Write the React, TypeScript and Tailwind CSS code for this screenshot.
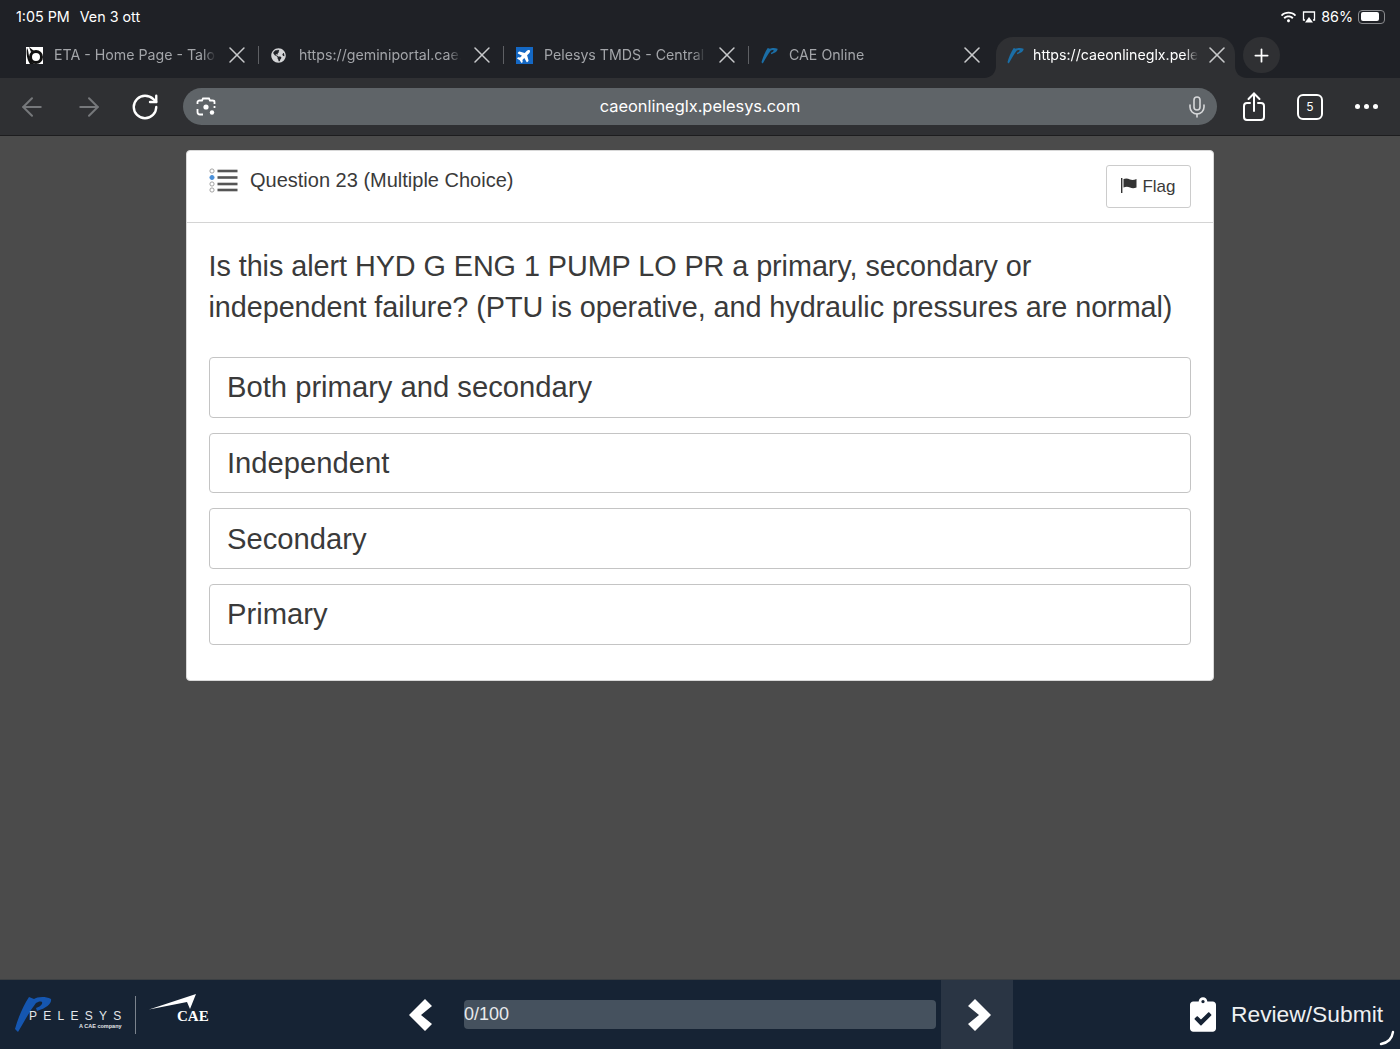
import { ArrowLeft, ArrowRight, Mic, Plus, RotateCw, X } from "lucide-react";
import { FaClipboardCheck, FaGlobeAmericas, FaPlane, FaWifi } from "react-icons/fa";

const answers = ["Both primary and secondary", "Independent", "Secondary", "Primary"];

function PMark({ className }: { className: string }) {
  return (
    <svg viewBox="0 0 38 36" className={className} fill="currentColor">
      <path d="M1 33 C4 22 9 10 15 1 L20 3 C23 1 31 0 37 3 C38 7 33 12 23 15 L22 12 C26 11 29 8 28 6 C26 5 24 6 22 7 C15 16 10 26 4 36 Z" />
    </svg>
  );
}

function TabIcon({ kind }: { kind: string }) {
  if (kind === "eta") {
    return (
      <svg viewBox="0 0 17 17" className="w-[17px] h-[17px]">
        <rect width="17" height="17" fill="#fff" />
        <path d="M1 1 C3 4 2 9 5 14 C6 16 8 17 11 17 L4 17 C1 13 0 6 1 1Z" fill="#111" />
        <circle cx="10" cy="10" r="5.5" fill="none" stroke="#111" strokeWidth="3" />
        <path d="M3 0 L8 4 L5 5Z" fill="#111" />
      </svg>
    );
  }
  if (kind === "globe") return <FaGlobeAmericas className="w-[15px] h-[15px] text-[#d4d5d7]" />;
  if (kind === "plane") {
    return (
      <div className="w-[17px] h-[17px] bg-[#1468c4] flex items-center justify-center">
        <FaPlane className="w-[15px] h-[15px] text-white -rotate-45" />
      </div>
    );
  }
  return <PMark className="w-[17px] h-[17px] text-[#1b6ea6]" />;
}

const tabs = [
  { icon: "eta", title: "ETA - Home Page - Talon" },
  { icon: "globe", title: "https://geminiportal.cae.com" },
  { icon: "plane", title: "Pelesys TMDS - Central" },
  { icon: "p", title: "CAE Online" },
];

function App() {
  return (
    <div className="h-[1049px] w-[1400px] flex flex-col overflow-hidden bg-[#4b4b4b] font-['Inter','Liberation_Sans',sans-serif]">
      <div className="bg-[#1f2126]">
        <div className="h-[37px] pl-[16px] pr-[15px] pb-[4px] flex items-center justify-between text-white text-[14.3px]">
          <div className="flex gap-[10px]">
            <span>1:05 PM</span>
            <span>Ven 3 ott</span>
          </div>
          <div className="flex items-center">
            <FaWifi className="w-[15px] h-[12px]" />
            <svg viewBox="0 0 14 12" className="w-[14px] h-[12px] ml-[6px]" fill="none">
              <path d="M3 9 H1.5 V1 H12.5 V9 H11" stroke="#fff" strokeWidth="1.3" />
              <path d="M7 6 L11 11.5 H3 Z" fill="#fff" />
            </svg>
            <span className="ml-[5px]">86%</span>
            <div className="ml-[5px] w-[27px] h-[14px] rounded-[4px] border border-[#8a8b8e] p-[1.5px]">
              <div className="h-full w-[84%] rounded-[2px] bg-white" />
            </div>
          </div>
        </div>

        <div className="h-[41px] pl-[14px] flex">
          {tabs.map((t) => (
            <div key={t.title} className="w-[245px] h-[36px] flex items-center text-[14.2px] text-[#a3a5a9]">
              <div className="w-[40px] pl-[12px] flex items-center">
                <TabIcon kind={t.icon} />
              </div>
              <span className="w-[162px] whitespace-nowrap overflow-hidden [mask-image:linear-gradient(to_right,black_92%,transparent)]">{t.title}</span>
              <X className="ml-[7px] w-[28px] h-[28px] text-[#c8c9cb]" strokeWidth={1.3} />
              {t.icon !== "p" && <div className="ml-[7px] w-[1.5px] h-[18px] bg-[#5e6064]" />}
            </div>
          ))}
          <div className="relative ml-[2px] w-[239px] h-[41px] bg-[#2f3033] rounded-t-[17px] flex items-start">
            <svg viewBox="0 0 12 12" className="absolute bottom-0 -left-[12px] w-[12px] h-[12px]">
              <path d="M12 0 V12 H0 C7 12 12 7 12 0Z" fill="#2f3033" />
            </svg>
            <svg viewBox="0 0 12 12" className="absolute bottom-0 -right-[12px] w-[12px] h-[12px]">
              <path d="M0 0 V12 H12 C5 12 0 7 0 0Z" fill="#2f3033" />
            </svg>
            <div className="h-[36px] flex items-center text-[14.2px] text-white">
              <div className="w-[37px] pl-[11px] flex items-center">
                <TabIcon kind="p" />
              </div>
              <span className="w-[165px] whitespace-nowrap overflow-hidden [mask-image:linear-gradient(to_right,black_92%,transparent)]">https://caeonlineglx.pelesys.com</span>
              <X className="ml-[5px] w-[28px] h-[28px] text-[#c8c9cb]" strokeWidth={1.3} />
            </div>
          </div>
          <div className="ml-[8px] w-[37px] h-[36px] rounded-full bg-[#2f3033] flex items-center justify-center">
            <Plus className="w-[21px] h-[21px] text-white" strokeWidth={2} />
          </div>
        </div>
      </div>

      <div className="h-[58px] bg-[#2f3033] border-b border-[#1d1d1f] flex items-center pl-[4px]">
        <div className="w-[56px] flex justify-center">
          <ArrowLeft className="w-[30px] h-[30px] text-[#76787b]" strokeWidth={1.6} />
        </div>
        <div className="w-[57px] flex justify-center">
          <ArrowRight className="w-[30px] h-[30px] text-[#76787b]" strokeWidth={1.6} />
        </div>
        <div className="w-[56px] flex justify-center">
          <RotateCw className="w-[30px] h-[30px] text-white" strokeWidth={1.9} />
        </div>
        <div className="ml-[10px] w-[1034px] h-[37px] rounded-full bg-[#5f6468] relative flex items-center justify-center text-white text-[16.4px]">
          <svg viewBox="0 0 20 20" className="absolute left-[13px] w-[20px] h-[20px]" fill="none" stroke="#fff" strokeWidth="1.8">
            <path d="M1.5 7 V5 C1.5 4 2.5 3.5 3.5 3.5 H6 L7 1.5 H13 L14 3.5 H16.5 C17.5 3.5 18.5 4 18.5 5 V7" />
            <path d="M1.5 12 V15 C1.5 16.5 2.5 17.5 4 17.5 H7" />
            <path d="M18.5 11 V9" />
            <circle cx="10" cy="10" r="2.6" fill="#fff" stroke="none" />
            <circle cx="16" cy="15.5" r="2.2" fill="#fff" stroke="none" />
          </svg>
          caeonlineglx.pelesys.com
          <Mic className="absolute right-[8px] w-[24px] h-[24px] text-[#d6d7d9]" strokeWidth={1.6} />
        </div>
        <div className="ml-[9px] w-[56px] flex justify-center">
          <svg viewBox="0 0 24 30" className="w-[24px] h-[30px]" fill="none" stroke="#fff" strokeWidth="2" strokeLinecap="round">
            <path d="M12 19 V2 M6.5 7 L12 1.5 L17.5 7" />
            <path d="M8 11 H5 C3 11 2 12 2 14 V25 C2 27 3 28 5 28 H19 C21 28 22 27 22 25 V14 C22 12 21 11 19 11 H16" />
          </svg>
        </div>
        <div className="w-[56px] flex justify-center">
          <div className="w-[26px] h-[26px] rounded-[6px] border-2 border-white flex items-center justify-center text-white text-[12px]">5</div>
        </div>
        <div className="w-[56px] flex justify-center gap-[4px]">
          <div className="w-[5px] h-[5px] rounded-full bg-white" />
          <div className="w-[5px] h-[5px] rounded-full bg-white" />
          <div className="w-[5px] h-[5px] rounded-full bg-white" />
        </div>
      </div>

      <div className="flex-1 pt-[14px] font-['Liberation_Sans',sans-serif]">
        <div className="ml-[186px] w-[1028px] h-[531px] bg-white rounded-[4px] border border-[#d8d8d8] text-[#3a3a3a]">
          <div className="h-[72px] border-b border-[#d4d4d4] pl-[22px] pr-[22px] flex items-start justify-between">
            <div className="pt-[17px] flex items-center">
              <svg viewBox="0 0 29 25" className="w-[29px] h-[25px]">
                {[3, 9.5, 16, 22].map((y, i) => (
                  <g key={y}>
                    <circle cx="3" cy={y} r="2.1" fill={i === 1 ? "#4a90d9" : "#fff"} stroke={i === 1 ? "#4a90d9" : "#999"} strokeWidth="0.9" />
                    <rect x="8.5" y={y - 1.3} width="20" height="2.6" fill="#555" />
                  </g>
                ))}
              </svg>
              <span className="ml-[12px] text-[20px] -mt-[2px] leading-[24px]">Question 23 (Multiple Choice)</span>
            </div>
            <div className="mt-[14px] w-[85px] h-[43px] rounded-[3px] border border-[#ccc] flex items-center justify-center text-[17px]">
              <svg viewBox="0 0 16 15" className="w-[16px] h-[15px] -mt-[3px]">
                <rect x="0" y="0" width="1.4" height="15" fill="#333" />
                <path d="M2.5 1 C5 0 7 0.5 9 1.5 C11 2.2 13 2 15.5 1 V9.5 C13 10.5 11 10.5 9 9.5 C7 8.7 5 8.5 2.5 9.5Z" fill="#333" />
              </svg>
              <span className="ml-[5px]">Flag</span>
            </div>
          </div>
          <div className="pl-[21.5px] pr-[22px] pt-[23px]">
            <p className="text-[28.8px] leading-[41px] tracking-[-0.06px]">
              Is this alert HYD G ENG 1 PUMP LO PR a primary, secondary or independent failure? (PTU is operative, and hydraulic pressures are normal)
            </p>
            <div className="mt-[29px] flex flex-col gap-[15.2px]">
              {answers.map((a) => (
                <div key={a} className="h-[60.5px] rounded-[4px] border border-[#c4c4c4] pl-[17.5px] pt-[2px] flex items-center text-[29.2px]">
                  {a}
                </div>
              ))}
            </div>
          </div>
        </div>
      </div>

      <div className="relative h-[70px] bg-[#162334] border-t border-[#3c4043] flex items-center font-['Liberation_Sans',sans-serif]">
        <div className="relative w-[400px] h-full">
          <PMark className="absolute left-[14px] top-[16px] w-[38px] h-[36px] text-[#1556b0]" />
          <span className="absolute left-[29px] top-[29px] text-[12px] leading-[14px] tracking-[0.52em] text-[#e4e6e9]">PELESYS</span>
          <span className="absolute left-[79px] top-[43px] text-[5.5px] leading-[6px] font-bold text-[#e4e6e9] whitespace-nowrap">A CAE company</span>
          <div className="absolute left-[135px] top-[16px] w-[1px] h-[38px] bg-[#7b838d]" />
          <svg viewBox="0 0 47 16" className="absolute left-[149px] top-[14px] w-[47px] h-[16px]">
            <path d="M0 15.5 L47 0 L41 15 L38 8 Z" fill="#fff" />
          </svg>
          <span className="absolute left-[177px] top-[27px] text-[15px] leading-[18px] font-bold text-white font-['Liberation_Serif',serif]">CAE</span>
        </div>
        <div className="w-[42px] flex justify-center">
          <svg viewBox="0 0 24 32" className="w-[24px] h-[32px]" fill="#fff">
            <path d="M16 0 L23 7 L12 16 L23 25 L16 32 L0 16 Z" />
          </svg>
        </div>
        <div className="ml-[22px] w-[472px] h-[29px] rounded-[4px] bg-[#45515e] flex items-center text-[18px] text-[#e8eaec]">0/100</div>
        <div className="ml-[5px] w-[72px] h-full bg-[#2a3544] flex items-center justify-center">
          <svg viewBox="0 0 24 32" className="ml-[4px] w-[24px] h-[32px]" fill="#fff">
            <path d="M8 0 L1 7 L12 16 L1 25 L8 32 L24 16 Z" />
          </svg>
        </div>
        <FaClipboardCheck className="ml-[177px] w-[26px] h-[35px] text-white" />
        <span className="ml-[15px] text-[22.8px] text-[#eef0f2]">Review/Submit</span>
        <svg viewBox="0 0 16 16" className="absolute left-[1379px] top-[50px] w-[16px] h-[16px]" fill="none" stroke="#fff" strokeWidth="2.4" strokeLinecap="round">
          <path d="M14 2 C13 9 8 13 2 14" />
        </svg>
      </div>
    </div>
  );
}

export default App;
